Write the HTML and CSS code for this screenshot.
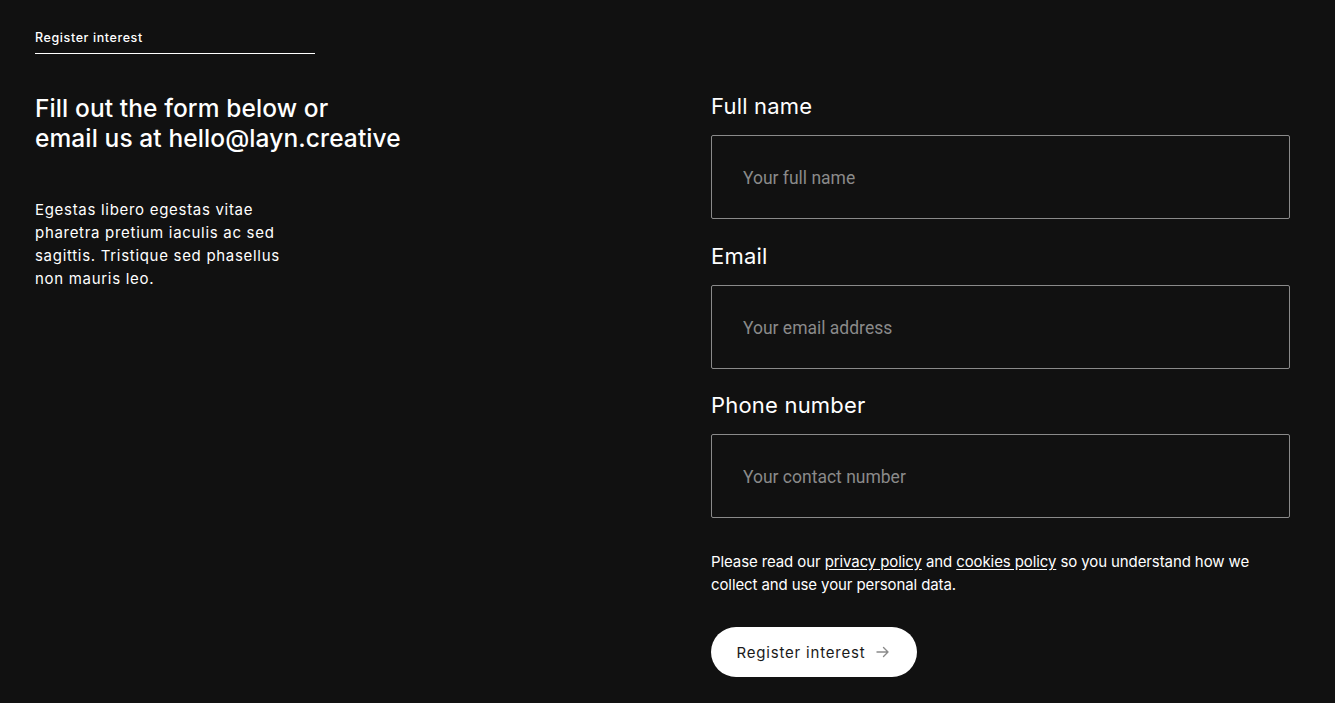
FILE: index.html
```html
<!DOCTYPE html>
<html lang="en">
<head>
<meta charset="utf-8">
<title>Register interest</title>
<link rel="stylesheet" href="styles.css">
</head>
<body>
<main class="page">
  <section class="intro">
    <div class="eyebrow">Register interest</div>
    <h1 class="headline">Fill out the form below or<br>email us at hello@layn.creative</h1>
    <p class="blurb">Egestas libero egestas vitae pharetra pretium iaculis ac sed sagittis. Tristique sed phasellus non mauris leo.</p>
  </section>
  <form class="form">
    <label class="field">
      <span class="label">Full name</span>
      <input class="input" type="text" placeholder="Your full name">
    </label>
    <label class="field">
      <span class="label">Email</span>
      <input class="input" type="email" placeholder="Your email address">
    </label>
    <label class="field">
      <span class="label">Phone number</span>
      <input class="input" type="tel" placeholder="Your contact number">
    </label>
    <p class="notice">Please read our <a href="#">privacy policy</a> and <a href="#">cookies policy</a> so you understand how we collect and use your personal data.</p>
    <button class="submit" type="button">Register interest
      <svg class="arrow" viewBox="0 0 16 16" width="16" height="16" aria-hidden="true"><path d="M2 8h11M8.5 3.5L13 8l-4.5 4.5" fill="none" stroke="currentColor" stroke-width="1.4" stroke-linecap="round" stroke-linejoin="round"/></svg>
    </button>
  </form>
</main>
</body>
</html>
```

FILE: styles.css
```css
html, body {
  margin: 0;
  padding: 0;
  background: #111111;
  color: #ffffff;
}
body {
  font-family: "Inter", sans-serif;
}
.page {
  display: grid;
  grid-template-columns: 676px 579px;
  padding: 0 45px 0 35px;
  height: 703px;
  box-sizing: border-box;
}
.intro {
  padding-top: 30px;
}
.eyebrow {
  width: 280px;
  font-size: 12.5px;
  font-weight: 500;
  letter-spacing: 0.6px;
  line-height: 16px;
  padding-bottom: 7px;
  border-bottom: 1px solid #ffffff;
}
.headline {
  margin: 39px 0 0 0;
  font-weight: 500;
  font-size: 24.5px;
  line-height: 30px;
  letter-spacing: 0.1px;
}
.blurb {
  margin: 45px 0 0 0;
  width: 262px;
  font-size: 15px;
  line-height: 23px;
  letter-spacing: 0.7px;
}
.form {
  display: flex;
  flex-direction: column;
  padding-top: 93px;
}
.field {
  display: flex;
  flex-direction: column;
  margin-bottom: 24px;
}
.field:nth-child(2) {
  margin-bottom: 23px;
}
.label {
  font-size: 22px;
  line-height: 26px;
  letter-spacing: 0.2px;
  margin-bottom: 16px;
}
.input {
  height: 84px;
  box-sizing: border-box;
  background: transparent;
  border: 1px solid #8a8a8a;
  border-radius: 2px;
  padding: 2px 31px 0 31px;
  font-family: "Roboto", sans-serif;
  font-size: 17.5px;
  color: #ffffff;
  outline: none;
}
.input::placeholder {
  color: #8a8a8a;
}
.notice {
  margin: 8px 0 0 0;
  font-size: 15px;
  line-height: 23px;
  letter-spacing: -0.1px;
  padding-right: 20px;
}
.notice a {
  color: #ffffff;
  text-decoration: underline;
  text-underline-offset: 2px;
}
.submit {
  margin-top: 31px;
  align-self: flex-start;
  width: 206px;
  height: 50px;
  border: none;
  border-radius: 25px;
  background: #ffffff;
  color: #1a1a1a;
  font-family: "Inter", sans-serif;
  font-size: 15px;
  letter-spacing: 0.8px;
  display: flex;
  align-items: center;
  justify-content: center;
  gap: 10px;
  padding: 0;
  cursor: pointer;
}
.arrow {
  color: #8a8a8a;
}
```
